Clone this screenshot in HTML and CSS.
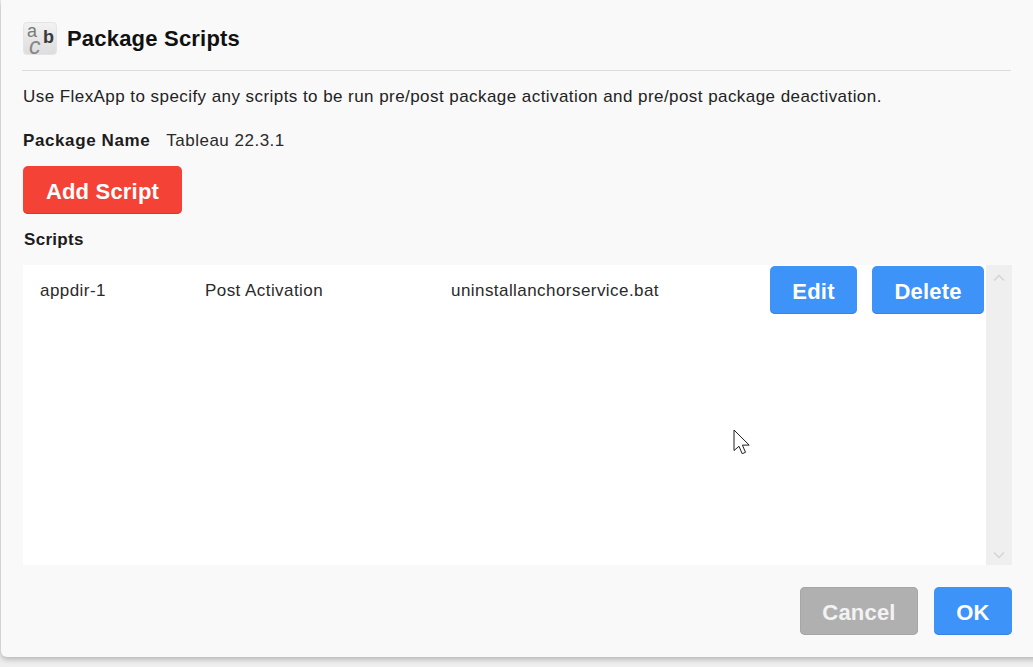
FILE: index.html
```html
<!DOCTYPE html>
<html lang="en">
<head>
<meta charset="utf-8">
<title>Package Scripts</title>
<link rel="stylesheet" href="styles.css">
</head>
<body>
<main class="dialog">
  <header class="head">
    <div class="app-icon">
      <span class="g g-a">a</span><span class="g g-b">b</span><span class="g g-c">c</span>
    </div>
    <h1 class="title">Package Scripts</h1>
  </header>
  <p class="intro">Use FlexApp to specify any scripts to be run pre/post package activation and pre/post package deactivation.</p>
  <div class="pkg"><strong class="pkg-label">Package Name</strong><span>Tableau 22.3.1</span></div>
  <button class="btn btn-red btn-add">Add Script</button>
  <h2 class="scripts-label">Scripts</h2>
  <section class="list">
    <div class="rows">
      <div class="row">
        <span class="c1">appdir-1</span>
        <span class="c2">Post Activation</span>
        <span class="c3">uninstallanchorservice.bat</span>
        <div class="actions">
          <button class="btn btn-blue btn-edit">Edit</button>
          <button class="btn btn-blue btn-del">Delete</button>
        </div>
      </div>
    </div>
    <div class="scrollbar">
      <svg class="arrow" width="12" height="8" viewBox="0 0 12 8"><path d="M1 6.5 6 1.5l5 5" fill="none" stroke="#d4d4d4" stroke-width="1.4"/></svg>
      <svg class="arrow" width="12" height="8" viewBox="0 0 12 8"><path d="M1 1.5 6 6.5l5-5" fill="none" stroke="#d4d4d4" stroke-width="1.4"/></svg>
    </div>
  </section>
  <footer class="foot">
    <button class="btn btn-grey btn-cancel">Cancel</button>
    <button class="btn btn-blue btn-ok">OK</button>
  </footer>
  <svg class="cursor" width="20" height="29" viewBox="0 0 20 29"><path d="M1 1v20.5l5-4.2 3.2 7.4 3.3-1.4-3.1-7.2h6.8z" fill="#fff" stroke="#1e1e1e" stroke-width="1"/></svg>
</main>
</body>
</html>
```

FILE: styles.css
```css
* { box-sizing: border-box; }
html, body { margin: 0; height: 100%; }
body {
  width: 1033px;
  height: 667px;
  overflow: hidden;
  background: #efefef;
  font-family: "Liberation Sans", Arial, sans-serif;
  color: #1c1c1c;
  padding-left: 1px;
}
.dialog {
  position: relative;
  width: 1040px;
  height: 657px;
  background: #f9f9f9;
  border-radius: 0 0 6px 6px;
  box-shadow: 0 2px 6px rgba(0,0,0,.28);
  padding: 22px 0 0 21px;
}
.head {
  width: 989px;
  height: 49px;
  display: flex;
  align-items: flex-start;
  gap: 10px;
  border-bottom: 1px solid #dcdcdc;
}
.app-icon {
  position: relative;
  width: 34px;
  height: 33px;
  margin-left: 1px;
  border-radius: 4px;
  border: 1px solid #e4e4e4;
  background: linear-gradient(#f2f2f2, #dddddd);
  flex: none;
}
.g { position: absolute; font-family: "Liberation Sans", sans-serif; line-height: .72; }
.g-a { left: 3px; top: 2px; font-size: 18px; color: #7a7a7a; }
.g-b { left: 19px; top: 6px; font-size: 18px; font-weight: 700; line-height: .9; color: #3a3a3a; }
.g-c { left: 5px; top: 15px; font-size: 23px; font-style: italic; color: #868686; }
.title {
  margin: 4px 0 0;
  font-size: 22px;
  line-height: 26px;
  font-weight: 700;
  color: #111;
  letter-spacing: .2px;
}
.intro {
  margin: 16px 0 0 1px;
  font-size: 17px;
  line-height: 20px;
  letter-spacing: .44px;
  color: #222;
}
.pkg {
  margin: 24px 0 0 1px;
  font-size: 17px;
  line-height: 20px;
  letter-spacing: .5px;
  display: flex;
  gap: 16px;
  color: #2a2a2a;
}
.pkg-label { color: #1c1c1c; letter-spacing: .6px; }
.btn {
  display: block;
  border: 0;
  padding: 4px 0 0;
  font-family: "Liberation Sans", Arial, sans-serif;
  font-size: 22px;
  font-weight: 700;
  color: #fff;
  border-radius: 5px;
  height: 48px;
  letter-spacing: .2px;
}
.btn-red { background: #f44336; box-shadow: inset 0 -1px 0 #d9382c; }
.btn-blue { background: #3d93f8; box-shadow: inset 0 -1px 0 #3584e4; }
.btn-grey { background: #b0b0b0; box-shadow: inset 0 0 0 1px #a6a6a6; }
.btn-add { width: 159px; margin: 15px 0 0 1px; }
.scripts-label {
  margin: 16px 0 0 2px;
  font-size: 17px;
  line-height: 20px;
  letter-spacing: .3px;
  font-weight: 700;
  color: #1c1c1c;
}
.list {
  margin: 15px 0 0 1px;
  width: 989px;
  height: 300px;
  display: flex;
  background: #fff;
}
.rows { flex: 1; min-width: 0; }
.row {
  display: flex;
  align-items: center;
  height: 50px;
  font-size: 17px;
  letter-spacing: .44px;
  color: #2a2a2a;
}
.c1, .c2, .c3 { padding-top: 2px; }
.c1 { width: 182px; padding-left: 17px; }
.c2 { width: 246px; }
.c3 { flex: 1; }
.actions { display: flex; gap: 15px; margin-right: 2px; }
.btn-edit { width: 87px; }
.btn-del { width: 112px; }
.scrollbar {
  width: 26px;
  flex: none;
  background: #efefef;
  display: flex;
  flex-direction: column;
  justify-content: space-between;
  align-items: center;
  padding: 9px 0 6px;
}
.foot {
  width: 989px;
  margin: 22px 0 0 1px;
  display: flex;
  justify-content: flex-end;
  gap: 16px;
}
.btn-cancel { width: 118px; color: #f3f3f3; }
.btn-ok { width: 78px; }
.cursor { position: absolute; left: 732px; top: 429px; }
```
